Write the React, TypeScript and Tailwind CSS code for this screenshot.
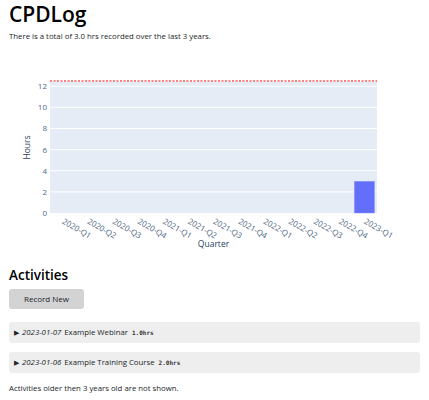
import React from 'react';

const quarters = [
  '2020-Q1', '2020-Q2', '2020-Q3', '2020-Q4',
  '2021-Q1', '2021-Q2', '2021-Q3', '2021-Q4',
  '2022-Q1', '2022-Q2', '2022-Q3', '2022-Q4',
  '2023-Q1',
];
const hours = [0, 0, 0, 0, 0, 0, 0, 0, 0, 0, 0, 0, 3];

const activities = [
  { date: '2023-01-07', title: 'Example Webinar', hrs: '1.0hrs' },
  { date: '2023-01-06', title: 'Example Training Course', hrs: '2.0hrs' },
];

// plot area in svg coords
const PL = 50;
const PR = 377;
const PT = 21;
const PB = 152;
const YMAX = 12.4;

function HoursChart() {
  const w = PR - PL;
  const slot = w / quarters.length;
  const y = (v: number) => PB - (v / YMAX) * (PB - PT);

  return (
    <svg width="429" height="197" className="block" style={{ fontFamily: '"Open Sans", "Liberation Sans", sans-serif' }}>
      <rect x={PL} y={PT} width={w} height={PB - PT} fill="#e5ecf6" />
      {[2, 4, 6, 8, 10, 12].map((v) => (
        <line key={v} x1={PL} x2={PR} y1={y(v)} y2={y(v)} stroke="#ffffff" strokeWidth="1" />
      ))}
      {[0, 2, 4, 6, 8, 10, 12].map((v) => (
        <text key={v} x={PL - 3} y={y(v) + 3} fontSize="8" fill="#506784" textAnchor="end">
          {v}
        </text>
      ))}
      {hours.map((h, i) =>
        h > 0 ? (
          <rect
            key={i}
            x={PL + i * slot + slot * 0.1}
            y={y(h)}
            width={slot * 0.8}
            height={PB - y(h)}
            fill="#636efa"
            stroke="#8a93fb"
            strokeWidth="0.5"
          />
        ) : null
      )}
      <line x1={PL} x2={PR} y1={PT - 1} y2={PT - 1} stroke="#ff0000" strokeWidth="1" strokeDasharray="2 1.5" />
      {quarters.map((q, i) => {
        const cx = PL + (i + 0.5) * slot;
        return (
          <text
            key={q}
            x={cx - 1}
            y={PB + 10}
            fontSize="8"
            fill="#506784"
            transform={`rotate(30 ${cx - 1} ${PB + 10})`}
          >
            {q}
          </text>
        );
      })}
      <text x={(PL + PR) / 2} y={PB + 34} fontSize="8.5" fill="#2a3f5f" textAnchor="middle">
        Quarter
      </text>
      <text
        x={30}
        y={(PT + PB) / 2}
        fontSize="8.5"
        fill="#2a3f5f"
        textAnchor="middle"
        transform={`rotate(-90 30 ${(PT + PB) / 2})`}
      >
        Hours
      </text>
    </svg>
  );
}

export default function App() {
  return (
    <div className="w-[429px] h-[400px] bg-white px-[9px] text-[#212529] font-['Open_Sans','Liberation_Sans',sans-serif]">
      <h1 className="text-[21px] font-semibold leading-[26px] pt-[1px] text-black">CPDLog</h1>
      <p className="text-[7.8px] leading-[11px] mt-[4px] text-[#212529]">
        There is a total of 3.0 hrs recorded over the last 3 years.
      </p>

      <div className="-mx-[9px] mt-[19px]">
        <HoursChart />
      </div>

      <h2 className="text-[13.5px] font-semibold leading-[18px] mt-[8px] text-black">Activities</h2>
      <button className="mt-[5px] w-[75px] h-[20px] rounded-[3px] bg-[#d3d3d3] text-[8px] text-[#212529]">
        Record New
      </button>

      <div className="mt-[13px] flex flex-col gap-[9px]">
        {activities.map((a) => (
          <div key={a.date} className="h-[21px] rounded-[3px] bg-[#eeeeee] flex items-center px-[5px] text-[7.8px]">
            <span className="text-[6.5px] mr-[3px]">▶</span>
            <em>{a.date}</em>
            <span className="ml-[3px]">{a.title}</span>
            <code className="ml-[4px] text-[6px] font-bold text-[#333] font-['DejaVu_Sans_Mono',monospace]">{a.hrs}</code>
          </div>
        ))}
      </div>

      <p className="text-[7.8px] leading-[11px] mt-[10px]">Activities older then 3 years old are not shown.</p>
    </div>
  );
}
